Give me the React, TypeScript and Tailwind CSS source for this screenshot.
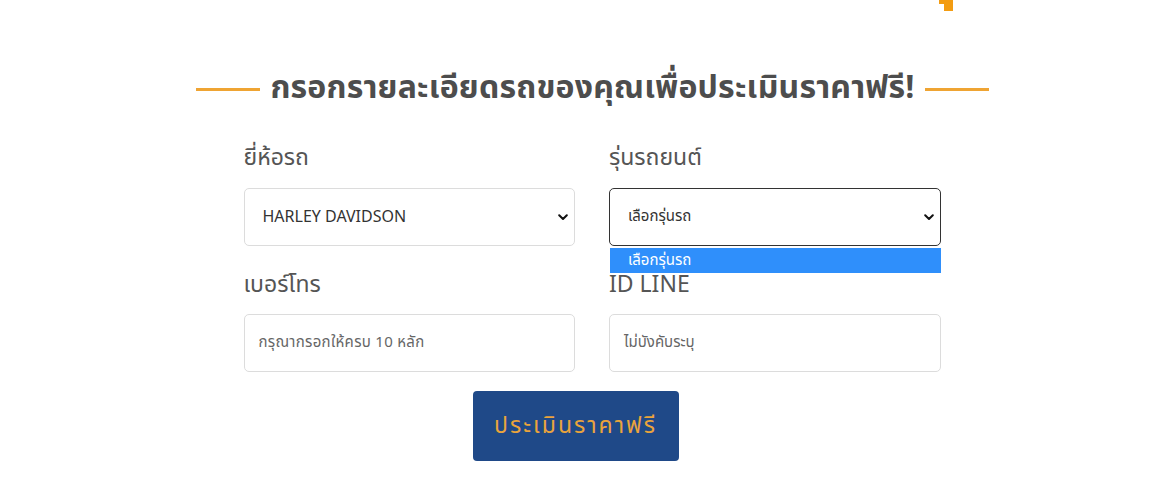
import React from "react";

const font = { fontFamily: '"Noto Sans Thai", "Noto Sans", "Liberation Sans", sans-serif' };

function Chevron() {
  return (
    <svg width="10" height="7" viewBox="0 0 10 7" className="shrink-0">
      <path d="M1.2 1.2 L5 5 L8.8 1.2" fill="none" stroke="#111" strokeWidth="2" strokeLinecap="round" strokeLinejoin="round" />
    </svg>
  );
}

export default function App() {
  return (
    <div className="relative w-full h-[501px] bg-white overflow-hidden" style={font}>
      <svg className="absolute left-[936px] top-0" width="20" height="14" viewBox="0 0 20 14">
        <path d="M3 0 H17 V11 H8 V4 H3 Z" fill="#f39c12" />
      </svg>

      <div className="pl-[18px] flex justify-center pt-[66px]">
        <div className="w-[794px] flex flex-col">
          <div className="flex items-center justify-center gap-[10px] h-[44px]">
            <div className="w-[64px] h-[3px] bg-[#efa433] mt-[3px]" />
            <div className="text-[32px] leading-[44px] font-bold text-[#4d4d4d] tracking-[0.2px] whitespace-nowrap">
              กรอกรายละเอียดรถของคุณเพื่อประเมินราคาฟรี!
            </div>
            <div className="w-[64px] h-[3px] bg-[#efa433] mt-[3px]" />
          </div>

          <div className="w-[697px] ml-[48px] mt-[32px]">
            <div className="grid grid-cols-2 gap-x-[34px]">
              <div className="flex flex-col">
                <div className="text-[23px] leading-[32px] text-[#555]">ยี่ห้อรถ</div>
                <div className="mt-[14px] h-[58px] border border-[#dcdcdc] rounded-[5px] flex items-center justify-between pl-[18px] pr-[6px] text-[16px] text-[#333]">
                  <span>HARLEY DAVIDSON</span>
                  <Chevron />
                </div>
              </div>
              <div className="flex flex-col relative">
                <div className="text-[23px] leading-[32px] text-[#555]">รุ่นรถยนต์</div>
                <div className="mt-[14px] h-[58px] border border-[#333] rounded-[5px] flex items-center justify-between pl-[18px] pr-[6px] text-[15px] text-[#333]">
                  <span>เลือกรุ่นรถ</span>
                  <Chevron />
                </div>
                <div className="absolute left-[1px] right-0 top-[106px] h-[25px] bg-[#2f8ffb] text-white text-[15px] leading-[25px] pl-[18px] z-10">
                  เลือกรุ่นรถ
                </div>
              </div>

              <div className="flex flex-col mt-[23px]">
                <div className="text-[23px] leading-[32px] text-[#555]">เบอร์โทร</div>
                <div className="mt-[13px] h-[58px] border border-[#dcdcdc] rounded-[5px] flex items-center pl-[14px] text-[15px] text-[#666] tracking-[0.3px]">
                  กรุณากรอกให้ครบ 10 หลัก
                </div>
              </div>
              <div className="flex flex-col mt-[23px]">
                <div className="text-[23px] leading-[32px] text-[#555]">ID LINE</div>
                <div className="mt-[13px] h-[58px] border border-[#dcdcdc] rounded-[5px] flex items-center pl-[14px] text-[15px] text-[#666]">
                  ไม่บังคับระบุ
                </div>
              </div>
            </div>

            <div className="mt-[19px] ml-[229px] w-[206px] h-[70px] bg-[#1f4988] rounded-[4px] flex items-center justify-center text-[23px] text-[#eaa43c] tracking-[2px]">
              ประเมินราคาฟรี
            </div>
          </div>
        </div>
      </div>
    </div>
  );
}
